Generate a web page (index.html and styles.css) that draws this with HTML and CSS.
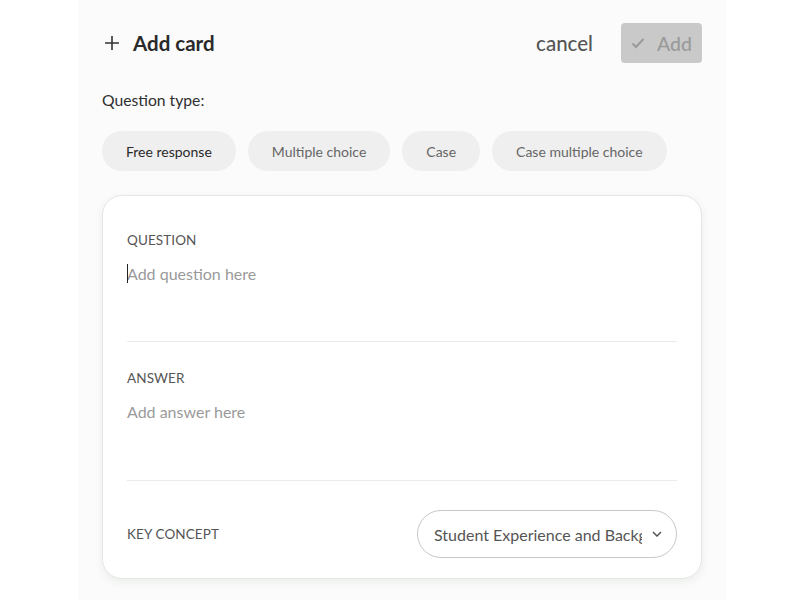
FILE: index.html
```html
<!DOCTYPE html>
<html lang="en">
<head>
<meta charset="utf-8">
<title>Add card</title>
<link rel="stylesheet" href="styles.css">
</head>
<body>
<div class="panel">
  <header class="header">
    <div class="title">
      <svg class="plus" width="16" height="16" viewBox="0 0 16 16"><path d="M8 1v14M1 8h14" stroke="#333" stroke-width="1.6" fill="none"/></svg>
      <span>Add card</span>
    </div>
    <div class="actions">
      <button class="cancel">cancel</button>
      <button class="add">
        <svg width="14" height="12" viewBox="0 0 14 12"><path d="M1.5 6.5l3.5 3.5 7.5-8" stroke="#9a9a9a" stroke-width="2" fill="none"/></svg>
        <span>Add</span>
      </button>
    </div>
  </header>

  <div class="qtype-label">Question type:</div>
  <div class="chips">
    <button class="chip active">Free response</button>
    <button class="chip">Multiple choice</button>
    <button class="chip">Case</button>
    <button class="chip">Case multiple choice</button>
  </div>

  <div class="card">
    <section class="field">
      <div class="label">QUESTION</div>
      <div class="input"><span class="caret"></span>Add question here</div>
    </section>
    <section class="field field-answer">
      <div class="label">ANSWER</div>
      <div class="input">Add answer here</div>
    </section>
    <section class="key">
      <div class="label">KEY CONCEPT</div>
      <div class="select">
        <span class="select-text">Student Experience and Background</span>
        <svg class="chev" width="10" height="6" viewBox="0 0 10 6"><path d="M1 1l4 4 4-4" stroke="#555" stroke-width="1.5" fill="none"/></svg>
      </div>
    </section>
  </div>
</div>
</body>
</html>
```

FILE: styles.css
```css
* { box-sizing: border-box; }
html, body { margin: 0; padding: 0; background: #ffffff; }
body { font-family: "Lato", "Noto Sans", sans-serif; color: #333; }

.panel {
  width: 648px;
  min-height: 600px;
  margin: 0 auto;
  background: #fafbfa;
  padding: 23px 24px 0;
}

.header {
  display: flex;
  align-items: center;
  justify-content: space-between;
  height: 40px;
}
.title {
  display: flex;
  align-items: center;
  gap: 13px;
  font-size: 20.5px;
  font-weight: 700;
  color: #2a2a2a;
  padding-left: 2px;
}
.actions { display: flex; align-items: center; gap: 28px; }
button { font-family: inherit; border: none; cursor: pointer; }
.cancel {
  background: none;
  font-size: 20.5px;
  font-weight: 500;
  color: #555;
  padding: 0;
}
.add {
  display: flex;
  align-items: center;
  gap: 12px;
  width: 81px;
  height: 40px;
  padding: 0 10px;
  background: #c9c9c9;
  border-radius: 4px;
  font-size: 19.5px;
  font-weight: 500;
  color: #9a9a9a;
}

.qtype-label {
  margin-top: 27px;
  font-size: 15.7px;
  line-height: 20px;
  color: #2f2f2f;
}

.chips {
  display: flex;
  gap: 12px;
  margin-top: 21px;
}
.chip {
  height: 40px;
  padding: 0 24px;
  border-radius: 20px;
  background: #efefef;
  font-size: 14px;
  color: #666;
}
.chip.active { color: #2a2a2a; }

.card {
  margin-top: 24px;
  background: #fff;
  border: 1px solid #e4e6e4;
  border-radius: 20px;
  box-shadow: 0 3px 8px rgba(60, 80, 60, 0.08);
  padding: 8px 24px 20px;
}
.field {
  padding: 26px 0 12px;
  border-bottom: 1px solid #ebebeb;
}
.field-answer { padding-bottom: 13px; }
.label {
  font-size: 13.5px;
  line-height: 20px;
  color: #555;
  letter-spacing: 0.1px;
}
.input {
  margin-top: 13px;
  height: 66px;
  font-size: 16px;
  line-height: 22px;
  color: #9a9a9a;
  position: relative;
}
.caret {
  position: absolute;
  left: 0;
  top: 1px;
  width: 1px;
  height: 19px;
  background: #222;
}
.key {
  display: flex;
  align-items: center;
  justify-content: space-between;
  padding-top: 29px;
}
.select {
  width: 260px;
  height: 48px;
  border: 1px solid #c8c8c8;
  border-radius: 24px;
  display: flex;
  align-items: center;
  padding: 0 14px 0 16px;
  gap: 10px;
}
.select-text {
  flex: 1;
  overflow: hidden;
  white-space: nowrap;
  font-size: 16px;
  color: #555;
}
.chev { flex: none; }
```
